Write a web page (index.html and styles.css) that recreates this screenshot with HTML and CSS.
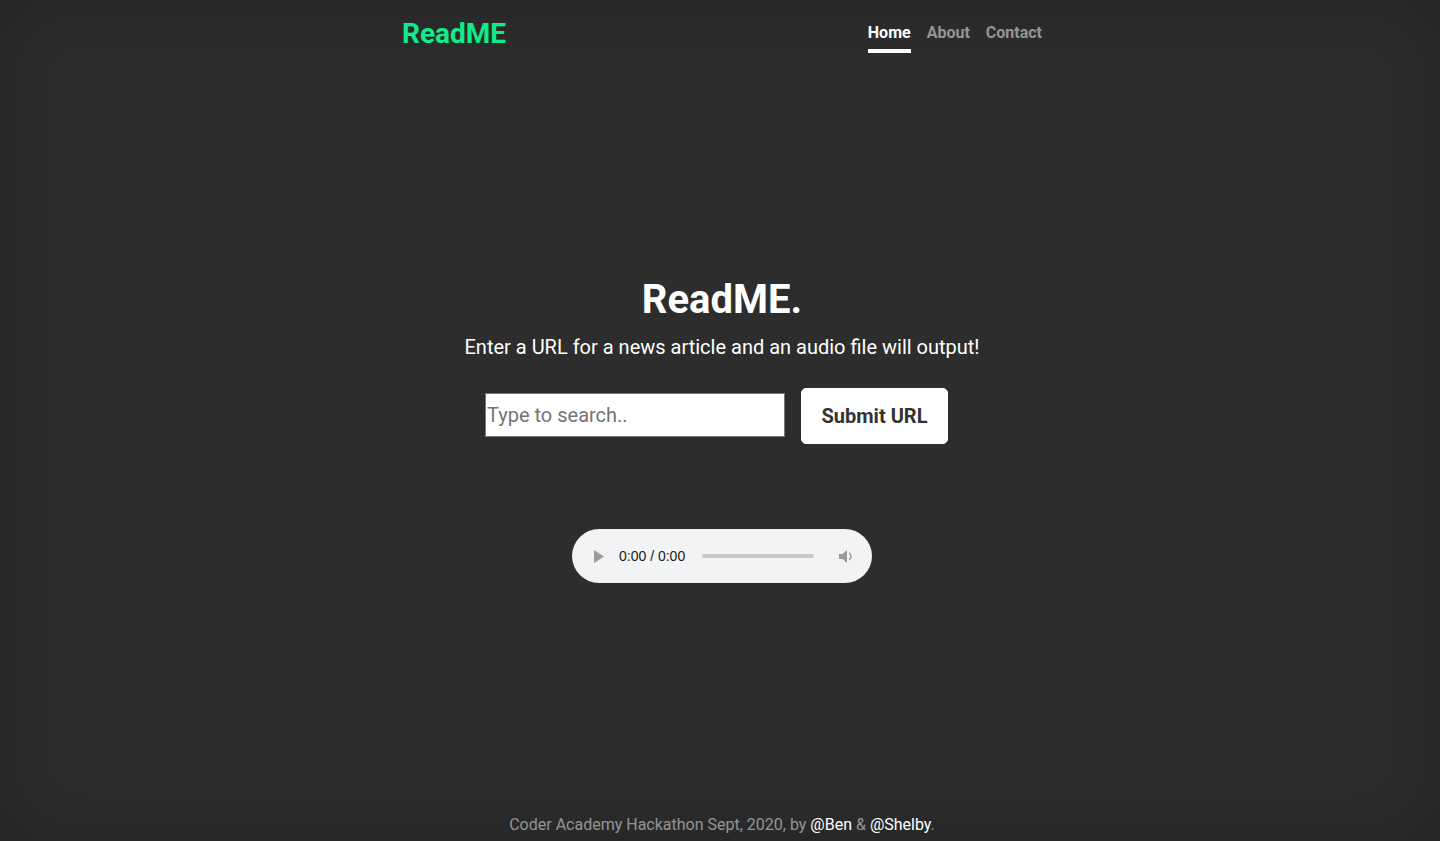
FILE: index.html
```html
<!DOCTYPE html>
<html lang="en">
<head>
<meta charset="utf-8">
<title>ReadME</title>
<link rel="stylesheet" href="styles.css">
</head>
<body>
<div class="cover">
  <header class="masthead">
    <h3 class="brand">ReadME</h3>
    <nav class="nav">
      <a class="nav-link active" href="#">Home</a>
      <a class="nav-link" href="#">About</a>
      <a class="nav-link" href="#">Contact</a>
    </nav>
  </header>
  <main class="inner">
    <h1 class="cover-heading">ReadME.</h1>
    <p class="lead">Enter a URL for a news article and an audio file will output!</p>
    <form class="search-row">
      <input class="search-input" type="text" placeholder="Type to search..">
      <button class="submit-btn" type="button">Submit URL</button>
    </form>
    <div class="audio">
      <svg class="play" width="10" height="13" viewBox="0 0 10 13"><path d="M0 0 L10 6.5 L0 13 Z" fill="#9b9c9d"/></svg>
      <span class="time">0:00 / 0:00</span>
      <span class="track"></span>
      <svg class="vol" width="17" height="17" viewBox="0 0 17 17"><path d="M1 6h3.5L9 2v13l-4.5-4H1z" fill="#9b9c9d"/><path d="M11 4.3a4.6 4.6 0 0 1 0 8.4v-1.8a2.9 2.9 0 0 0 0-4.8z" fill="#9b9c9d"/></svg>
    </div>
  </main>
  <footer class="mastfoot">
    <p>Coder Academy Hackathon Sept, 2020, by <a href="#">@Ben</a> &amp; <a href="#">@Shelby</a>.</p>
  </footer>
</div>
</body>
</html>
```
FILE: styles.css
```css
html, body {
  height: 100%;
}
body {
  margin: 0;
  background-color: #2d2d2d;
  box-shadow: inset 0 0 5rem rgba(0, 0, 0, .22);
  color: #fff;
  font-family: Roboto, "Liberation Sans", Arial, sans-serif;
  font-size: 16px;
  line-height: 1.5;
  overflow: hidden;
}
.cover {
  box-sizing: border-box;
  max-width: 672px;
  height: 100%;
  margin: 0 auto;
  padding: 17px 14px 4px 18px;
  display: flex;
  flex-direction: column;
}
.masthead {
  display: flex;
  justify-content: space-between;
  align-items: flex-start;
}
.brand {
  margin: 0;
  font-size: 28px;
  line-height: 1.2;
  font-weight: 700;
  color: #0fed8a;
}
.nav {
  display: flex;
}
.nav-link {
  margin-left: 16px;
  padding: 4px 0;
  font-weight: 700;
  color: rgba(255, 255, 255, .5);
  text-decoration: none;
  border-bottom: 4px solid transparent;
}
.nav-link.active {
  color: #fff;
  border-bottom-color: #fff;
}
.inner {
  margin-top: 223px;
  display: flex;
  flex-direction: column;
  align-items: center;
  text-align: center;
}
.cover-heading {
  margin: 0 0 8px;
  font-size: 40px;
  line-height: 1.2;
  font-weight: 700;
}
.lead {
  margin: 0;
  font-size: 20px;
  line-height: 1.5;
}
.search-row {
  margin: 26px 11px 0 0;
  display: flex;
  align-items: center;
  gap: 16px;
}
.search-input {
  box-sizing: border-box;
  width: 300px;
  height: 44px;
  margin: 0 0 2px;
  padding: 0 1px;
  border: 1px solid #767676;
  background: #fff;
  font-family: Roboto, "Liberation Sans", Arial, sans-serif;
  font-size: 20px;
  color: #333;
}
.search-input::placeholder {
  color: #757575;
}
.submit-btn {
  box-sizing: border-box;
  width: 147px;
  height: 56px;
  padding: 0;
  border: 1px solid #fff;
  border-radius: 5px;
  background: #fff;
  color: #333;
  font-family: Roboto, "Liberation Sans", Arial, sans-serif;
  font-size: 20px;
  font-weight: 700;
}
.audio {
  margin-top: 85px;
  box-sizing: border-box;
  width: 300px;
  height: 54px;
  border-radius: 27px;
  background: #f1f3f4;
  display: flex;
  align-items: center;
  padding: 0 0 0 22px;
}
.play {
  flex: none;
}
.time {
  margin-left: 15px;
  font-size: 14px;
  color: #1c1c1c;
  white-space: nowrap;
  font-family: "Liberation Sans", Arial, sans-serif;
}
.track {
  margin-left: 17px;
  width: 112px;
  height: 4px;
  border-radius: 2px;
  background: #c6c7c8;
}
.vol {
  margin-left: 24px;
  flex: none;
}
.mastfoot {
  margin-top: auto;
  text-align: center;
  color: rgba(255, 255, 255, .5);
}
.mastfoot p {
  margin: 0;
}
.mastfoot a {
  color: #fff;
  text-decoration: none;
}
```
